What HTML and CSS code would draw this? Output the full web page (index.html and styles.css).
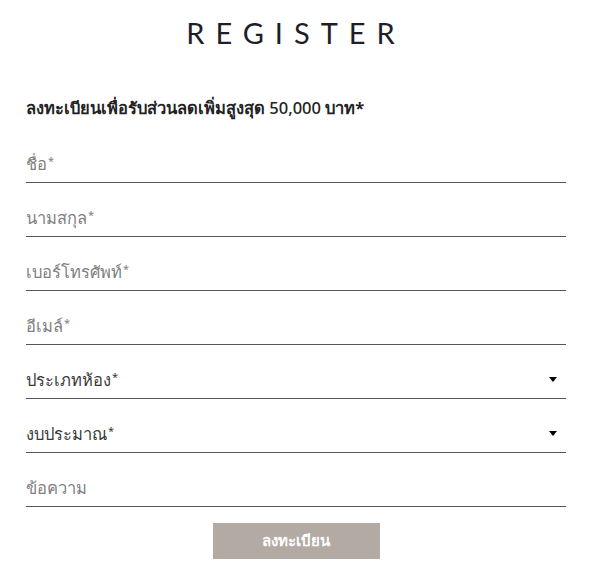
FILE: index.html
```html
<!DOCTYPE html>
<html lang="th">
<head>
<meta charset="utf-8">
<link rel="stylesheet" href="styles.css">
</head>
<body>
<div class="page">
  <h1 class="title">REGISTER</h1>
  <p class="lead">ลงทะเบียนเพื่อรับส่วนลดเพิ่มสูงสุด <span class="num">50,000</span> บาท*</p>
  <form class="form">
    <div class="field"><span class="ph">ชื่อ<span class="req">*</span></span></div>
    <div class="field"><span class="ph">นามสกุล<span class="req">*</span></span></div>
    <div class="field"><span class="ph">เบอร์โทรศัพท์<span class="req">*</span></span></div>
    <div class="field"><span class="ph">อีเมล์<span class="req">*</span></span></div>
    <div class="field select"><span class="ph dark">ประเภทห้อง<span class="req">*</span></span><span class="caret"></span></div>
    <div class="field select"><span class="ph dark">งบประมาณ<span class="req">*</span></span><span class="caret"></span></div>
    <div class="field"><span class="ph">ข้อความ</span></div>
    <div class="actions"><button type="button" class="btn">ลงทะเบียน</button></div>
  </form>
</div>
</body>
</html>
```
FILE: styles.css
```css
html, body { margin: 0; padding: 0; background: #fff; }
body { font-family: "Noto Sans", Tahoma, sans-serif; }
.page { width: 540px; padding: 0 24px 0 26px; }
.title {
  margin: 0;
  padding-top: 16px;
  text-align: center;
  font-family: "Lato", sans-serif;
  font-weight: 400;
  font-size: 29px;
  line-height: 34px;
  letter-spacing: 11px;
  color: #1e1e28;
}
.lead {
  margin: 48px 0 0;
  font-size: 16.5px;
  font-weight: 700;
  line-height: 20px;
  color: #222;
}
.lead .num { font-weight: 500; }
.form { display: flex; flex-direction: column; }
.field {
  border-bottom: 1px solid #555;
  display: flex;
  align-items: flex-end;
  justify-content: space-between;
  padding-bottom: 8px;
  box-sizing: border-box;
  height: 54px;
}
.field:first-child { height: 65px; }
.ph { font-size: 16.5px; line-height: 20px; color: #808080; }
.ph.dark { color: #3a3a3a; }
.req { font-size: 11px; vertical-align: 5px; margin-left: 1px; }
.caret {
  width: 0; height: 0;
  border-left: 4.5px solid transparent;
  border-right: 4.5px solid transparent;
  border-top: 5px solid #000;
  margin: 0 9px 8px 0;
}
.actions { display: flex; justify-content: center; padding-top: 16px; }
.btn {
  width: 167px; height: 36px;
  border: 0;
  background: #b3aaa4;
  color: #fff;
  font-family: inherit;
  font-weight: 700;
  font-size: 15px;
  padding: 0;
}
```
